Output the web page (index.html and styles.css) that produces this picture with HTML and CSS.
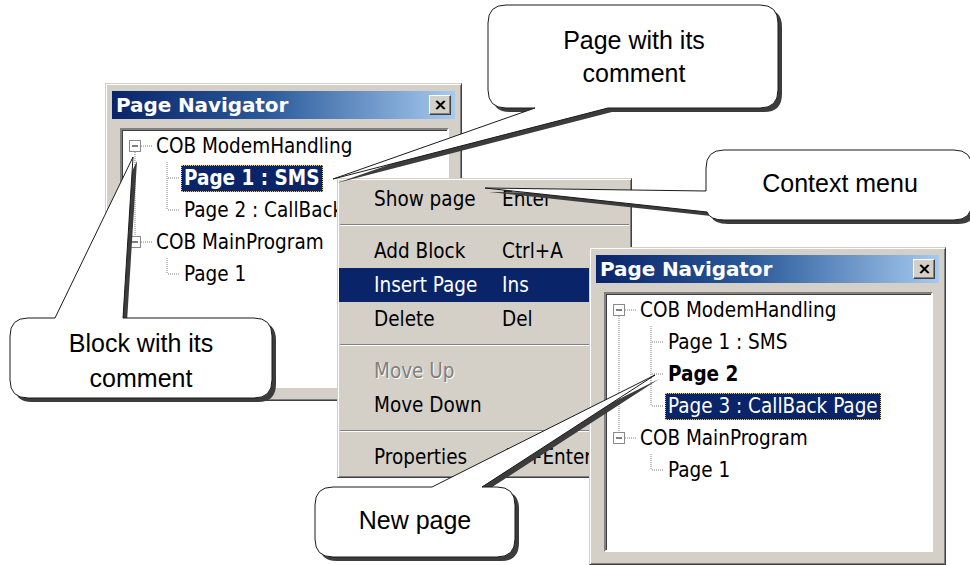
FILE: index.html
```html
<!DOCTYPE html>
<html>
<head>
<meta charset="utf-8">
<link rel="stylesheet" href="styles.css">
</head>
<body>
<div class="stage">

  <div class="win win-left">
    <div class="titlebar">
      <span class="title">Page Navigator</span>
      <span class="closebtn"><svg width="11" height="10" viewBox="0 0 11 10"><path d="M1 1 L9 9 M2 1 L10 9 M9 1 L1 9 M10 1 L2 9" stroke="#000" stroke-width="1.3" fill="none"/></svg></span>
    </div>
    <div class="tree">
      <div class="row">
        <svg class="gut root" width="31" height="32"><path d="M13 22V32" class="dot"/><path d="M19 16H30" class="dot"/><rect x="7.5" y="10.5" width="11" height="11" class="box"/><path d="M10 16H16" class="minus"/></svg>
        <span class="lbl">COB ModemHandling</span>
      </div>
      <div class="row">
        <svg class="gut child" width="59" height="32"><path d="M13 0V32" class="dot"/><path d="M45 0V32" class="dot"/><path d="M46 16H58" class="dot"/></svg>
        <span class="lbl bold sel">Page 1 : SMS</span>
      </div>
      <div class="row">
        <svg class="gut child" width="59" height="32"><path d="M13 0V32" class="dot"/><path d="M45 0V16" class="dot"/><path d="M46 16H58" class="dot"/></svg>
        <span class="lbl">Page 2 : CallBack Page</span>
      </div>
      <div class="row">
        <svg class="gut root" width="31" height="32"><path d="M13 0V10" class="dot"/><path d="M19 16H30" class="dot"/><rect x="7.5" y="10.5" width="11" height="11" class="box"/><path d="M10 16H16" class="minus"/></svg>
        <span class="lbl">COB MainProgram</span>
      </div>
      <div class="row">
        <svg class="gut child" width="59" height="32"><path d="M45 0V16" class="dot"/><path d="M46 16H58" class="dot"/></svg>
        <span class="lbl">Page 1</span>
      </div>
    </div>
  </div>

  <div class="menu">
    <div class="item"><span class="mlabel">Show page</span><span class="key">Enter</span></div>
    <div class="sep"></div>
    <div class="item"><span class="mlabel">Add Block</span><span class="key">Ctrl+A</span></div>
    <div class="item hi"><span class="mlabel">Insert Page</span><span class="key">Ins</span></div>
    <div class="item"><span class="mlabel">Delete</span><span class="key">Del</span></div>
    <div class="sep"></div>
    <div class="item dis"><span class="mlabel">Move Up</span><span class="key"></span></div>
    <div class="item"><span class="mlabel">Move Down</span><span class="key"></span></div>
    <div class="sep"></div>
    <div class="item"><span class="mlabel">Properties</span><span class="key">Alt+Enter</span></div>
  </div>

  <div class="win win-right">
    <div class="titlebar">
      <span class="title">Page Navigator</span>
      <span class="closebtn"><svg width="11" height="10" viewBox="0 0 11 10"><path d="M1 1 L9 9 M2 1 L10 9 M9 1 L1 9 M10 1 L2 9" stroke="#000" stroke-width="1.3" fill="none"/></svg></span>
    </div>
    <div class="tree">
      <div class="row">
        <svg class="gut root" width="31" height="32"><path d="M13 22V32" class="dot"/><path d="M19 16H30" class="dot"/><rect x="7.5" y="10.5" width="11" height="11" class="box"/><path d="M10 16H16" class="minus"/></svg>
        <span class="lbl">COB ModemHandling</span>
      </div>
      <div class="row">
        <svg class="gut child" width="59" height="32"><path d="M13 0V32" class="dot"/><path d="M45 0V32" class="dot"/><path d="M46 16H58" class="dot"/></svg>
        <span class="lbl">Page 1 : SMS</span>
      </div>
      <div class="row">
        <svg class="gut child" width="59" height="32"><path d="M13 0V32" class="dot"/><path d="M45 0V32" class="dot"/><path d="M46 16H58" class="dot"/></svg>
        <span class="lbl bold">Page 2</span>
      </div>
      <div class="row">
        <svg class="gut child" width="59" height="32"><path d="M13 0V32" class="dot"/><path d="M45 0V16" class="dot"/><path d="M46 16H58" class="dot"/></svg>
        <span class="lbl sel">Page 3 : CallBack Page</span>
      </div>
      <div class="row">
        <svg class="gut root" width="31" height="32"><path d="M13 0V10" class="dot"/><path d="M19 16H30" class="dot"/><rect x="7.5" y="10.5" width="11" height="11" class="box"/><path d="M10 16H16" class="minus"/></svg>
        <span class="lbl">COB MainProgram</span>
      </div>
      <div class="row">
        <svg class="gut child" width="59" height="32"><path d="M45 0V16" class="dot"/><path d="M46 16H58" class="dot"/></svg>
        <span class="lbl">Page 1</span>
      </div>
    </div>
  </div>

  <svg class="callouts" width="970" height="565" viewBox="0 0 970 565">
    <g class="co">
      <path class="shadow" transform="translate(4 4)" d="M506 5 H760 Q778 5 778 23 V90 Q778 108 760 108 H608 L333 179 L535 108 H506 Q488 108 488 90 V23 Q488 5 506 5 Z"/>
      <path class="bubble" d="M506 5 H760 Q778 5 778 23 V90 Q778 108 760 108 H608 L333 179 L535 108 H506 Q488 108 488 90 V23 Q488 5 506 5 Z"/>
      <text x="634" y="49">Page with its</text>
      <text x="634" y="82">comment</text>
    </g>
    <g class="co">
      <path class="shadow" transform="translate(4 4)" d="M724 150 H954 Q972 150 972 168 V202 Q972 220 954 220 H724 Q710 220 707 212 L485 188 L706 191 V168 Q706 150 724 150 Z"/>
      <path class="bubble" d="M724 150 H954 Q972 150 972 168 V202 Q972 220 954 220 H724 Q710 220 707 212 L485 188 L706 191 V168 Q706 150 724 150 Z"/>
      <text x="840" y="192">Context menu</text>
    </g>
    <g class="co">
      <path class="shadow" transform="translate(4 4)" d="M28 318 H55 L133 157 L123 318 H254 Q272 318 272 336 V380 Q272 398 254 398 H28 Q10 398 10 380 V336 Q10 318 28 318 Z"/>
      <path class="bubble" d="M28 318 H55 L133 157 L123 318 H254 Q272 318 272 336 V380 Q272 398 254 398 H28 Q10 398 10 380 V336 Q10 318 28 318 Z"/>
      <text x="141" y="352">Block with its</text>
      <text x="141" y="387">comment</text>
    </g>
    <g class="co">
      <path class="shadow" transform="translate(4 4)" d="M333 487 H432 L655 375 L482 487 H497 Q515 487 515 505 V539 Q515 557 497 557 H333 Q315 557 315 539 V505 Q315 487 333 487 Z"/>
      <path class="bubble" d="M333 487 H432 L655 375 L482 487 H497 Q515 487 515 505 V539 Q515 557 497 557 H333 Q315 557 315 539 V505 Q315 487 333 487 Z"/>
      <text x="415" y="529">New page</text>
    </g>
  </svg>

</div>
</body>
</html>
```
FILE: styles.css
```css
html, body {
  margin: 0;
  padding: 0;
  background: #ffffff;
}

.stage {
  position: relative;
  width: 970px;
  height: 565px;
  overflow: hidden;
  background: #ffffff;
  font-family: "DejaVu Sans Condensed", "DejaVu Sans", sans-serif;
  font-stretch: condensed;
  font-size: 20.5px;
  color: #000;
}

/* ---------- tool windows ---------- */
.win {
  position: absolute;
  width: 357px;
  height: 318px;
  box-sizing: border-box;
  background: #d4d0c8;
  border: 1px solid;
  border-color: #d4d0c8 #404040 #404040 #d4d0c8;
  box-shadow: inset 1px 1px 0 #ffffff, inset -1px -1px 0 #808080;
  padding: 7px 6px 12px 6px;
  display: flex;
  flex-direction: column;
}

.win-left { left: 105px; top: 83px; }
.win-right { left: 589px; top: 247px; }

.titlebar {
  height: 28px;
  flex: none;
  display: flex;
  align-items: center;
  justify-content: space-between;
  background: linear-gradient(to right, #0a246a 0%, #2a5a9a 45%, #a6caf0 100%);
  padding: 0 4px 0 4px;
}

.title {
  font-family: "DejaVu Sans", sans-serif;
  font-stretch: normal;
  font-weight: bold;
  font-size: 20px;
  color: #ffffff;
  letter-spacing: -0.1px;
}

.closebtn {
  width: 22px;
  height: 20px;
  box-sizing: border-box;
  background: #d4d0c8;
  border: 1px solid;
  border-color: #ffffff #404040 #404040 #ffffff;
  box-shadow: inset -1px -1px 0 #808080;
  display: flex;
  align-items: center;
  justify-content: center;
}

.tree {
  flex: 1;
  margin: 9px 6px 0 8px;
  background: #ffffff;
  border: 2px solid;
  border-color: #808080 #ffffff #ffffff #808080;
  box-shadow: inset 1px 1px 0 #404040;
  display: flex;
  flex-direction: column;
  overflow: hidden;
}

.row {
  height: 32px;
  flex: none;
  display: flex;
  align-items: center;
  white-space: nowrap;
}

.gut { flex: none; display: block; }

.dot {
  stroke: #808080;
  stroke-width: 1;
  stroke-dasharray: 1 1;
  fill: none;
}

.box {
  fill: #ffffff;
  stroke: #8a8a8a;
  stroke-width: 1;
}

.minus {
  stroke: #000000;
  stroke-width: 1;
}

.lbl {
  height: 27px;
  line-height: 25px;
  padding: 0 2px;
  box-sizing: border-box;
  border: 1px solid transparent;
}

.bold { font-weight: bold; }

.sel {
  background: #0a246a;
  color: #ffffff;
  border: 1px dotted #e8c860;
}

/* ---------- context menu ---------- */
.menu {
  position: absolute;
  left: 337px;
  top: 178px;
  width: 295px;
  box-sizing: border-box;
  background: #d4d0c8;
  border: 1px solid;
  border-color: #d4d0c8 #404040 #404040 #d4d0c8;
  box-shadow: inset 1px 1px 0 #ffffff, inset -1px -1px 0 #808080;
  padding: 3px 1px;
  display: flex;
  flex-direction: column;
}

.item {
  height: 34px;
  display: flex;
  align-items: center;
  padding-left: 35px;
  white-space: nowrap;
}

.mlabel { width: 128px; flex: none; }

.item.hi {
  background: #0a246a;
  color: #ffffff;
}

.item.dis {
  color: #808080;
  text-shadow: 1px 1px 0 #ffffff;
}

.sep {
  height: 0;
  margin: 8px 1px 8px 1px;
  border-top: 1px solid #808080;
  border-bottom: 1px solid #ffffff;
}

/* ---------- callouts overlay ---------- */
.callouts {
  position: absolute;
  left: 0;
  top: 0;
  pointer-events: none;
}

.shadow { fill: #3c3c3c; }

.bubble {
  fill: #ffffff;
  stroke: #1a1a1a;
  stroke-width: 1;
}

.co text {
  font-family: "Liberation Sans", Arial, sans-serif;
  font-size: 25px;
  fill: #000000;
  text-anchor: middle;
}
```
